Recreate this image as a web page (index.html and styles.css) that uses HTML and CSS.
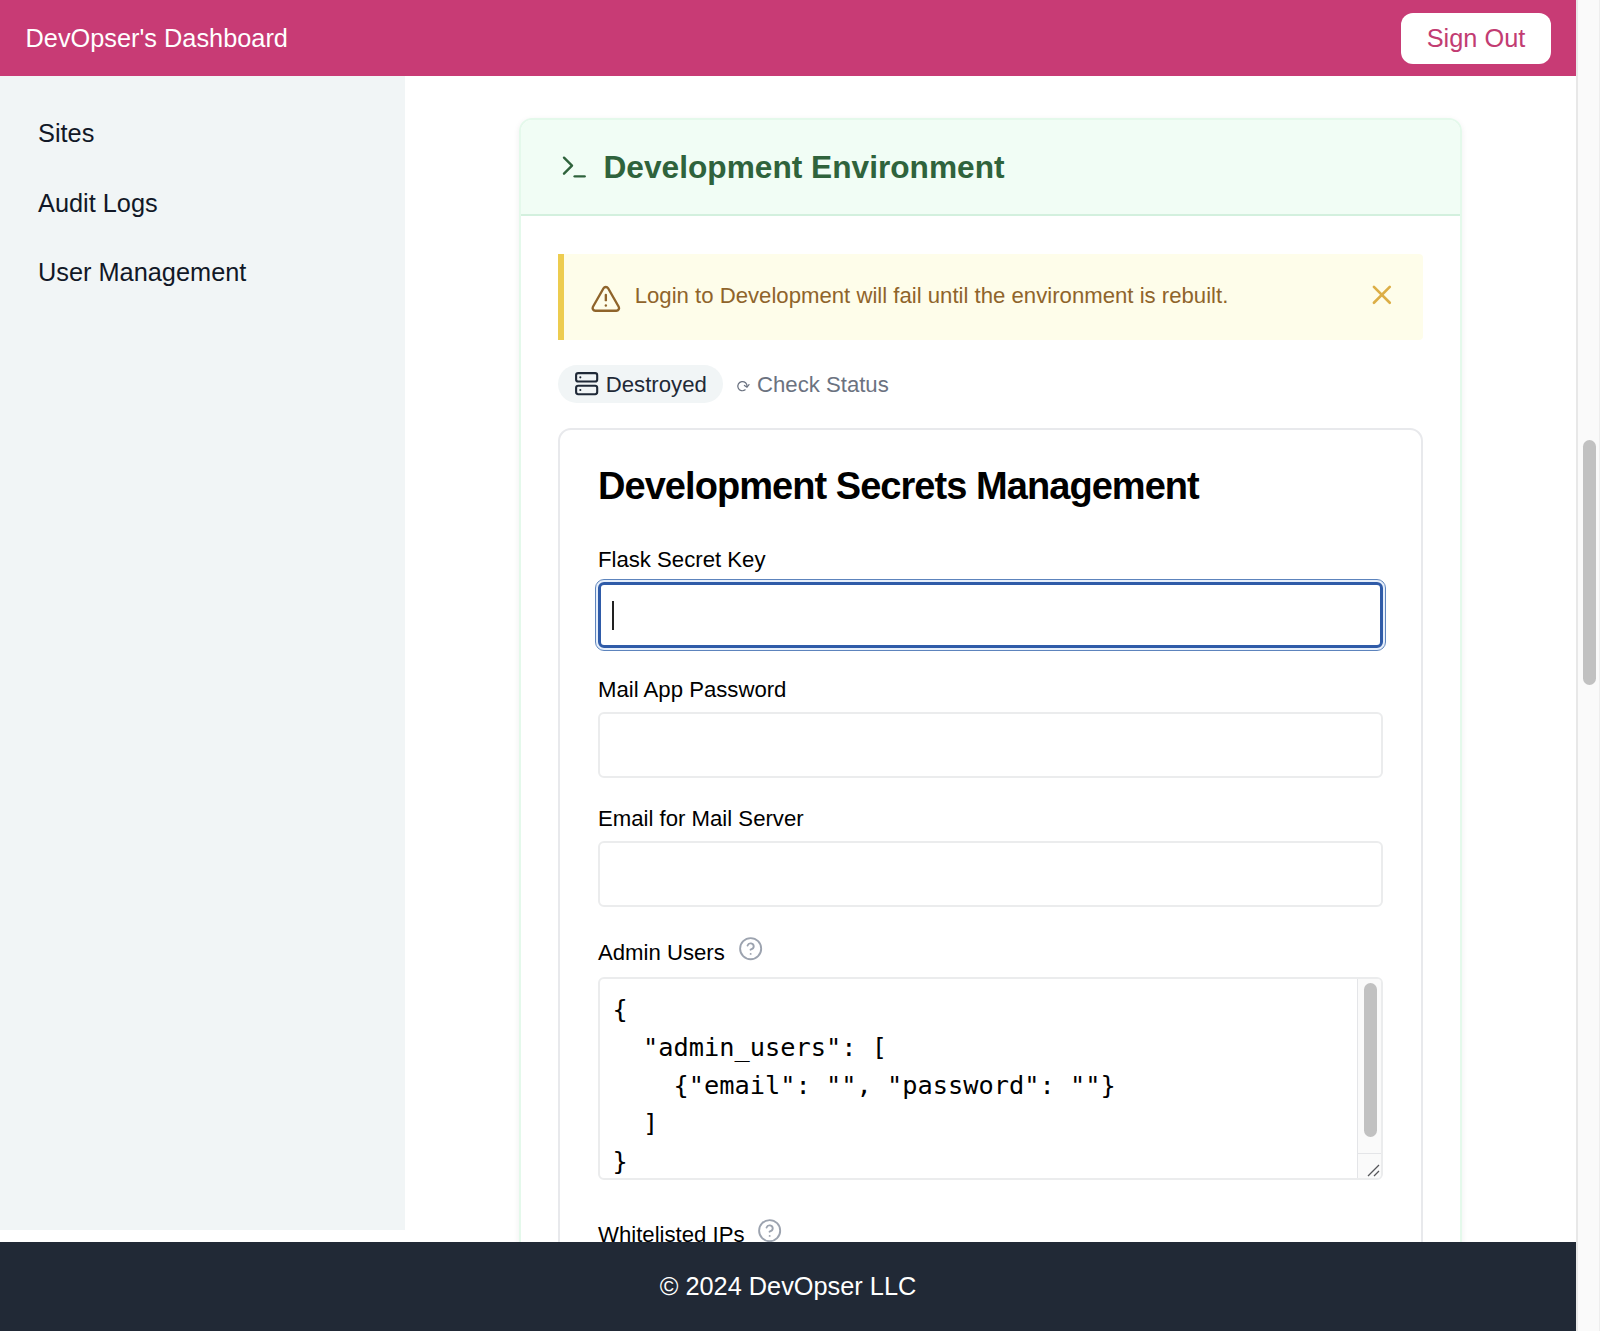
FILE: index.html
```html
<!DOCTYPE html>
<html lang="en">
<head>
    <meta charset="UTF-8">
    <meta name="viewport" content="width=device-width, initial-scale=1.0">
    <title>DevOpser's Dashboard</title>
    <link rel="stylesheet" href="styles.css">
</head>
<body>
    <div class="page">
        <header class="topbar">
            <div class="brand">DevOpser's Dashboard</div>
            <button class="sign-out">Sign Out</button>
        </header>

        <div class="content">
            <nav class="sidebar">
                <a class="nav-link">Sites</a>
                <a class="nav-link">Audit Logs</a>
                <a class="nav-link">User Management</a>
            </nav>

            <main class="main">
                <section class="env-card">
                    <div class="env-header">
                        <svg class="icon icon-terminal" viewBox="0 0 24 24"><path d="m4.5 17 6-6-6-6"/><path d="M12.5 19h7.5"/></svg>
                        <h2 class="env-title">Development Environment</h2>
                    </div>
                    <div class="env-body">
                        <div class="alert">
                            <svg class="icon icon-warning" viewBox="0 0 24 24"><path d="m21.73 18-8-14a2 2 0 0 0-3.48 0l-8 14A2 2 0 0 0 4 21h16a2 2 0 0 0 1.73-3Z"/><path d="M12 9v4"/><path d="M12 17h.01"/></svg>
                            <p class="alert-text">Login to Development will fail until the environment is rebuilt.</p>
                            <svg class="icon icon-close" viewBox="0 0 24 24"><path d="M18 6 6 18"/><path d="m6 6 12 12"/></svg>
                        </div>

                        <div class="status-row">
                            <span class="badge">
                                <svg class="icon icon-server" viewBox="0 0 24 24"><rect x="2" y="2" width="20" height="8" rx="2"/><rect x="2" y="14" width="20" height="8" rx="2"/><path d="M6 6h.01M6 18h.01"/></svg>
                                <span class="status-text">Destroyed</span>
                            </span>
                            <span class="check-status">
                                <svg class="icon icon-refresh" viewBox="0 0 14 14"><path d="M9.2 10.8A4.6 4.6 0 1 1 11 7.6"/><path d="M8.4 6.4 11 8.2l2-2.6"/></svg>
                                <span class="status-text">Check Status</span>
                            </span>
                        </div>

                        <form class="secrets">
                            <h3 class="secrets-title">Development Secrets Management</h3>

                            <label class="label">Flask Secret Key</label>
                            <div class="input focused"><span class="caret"></span></div>

                            <label class="label">Mail App Password</label>
                            <div class="input"></div>

                            <label class="label">Email for Mail Server</label>
                            <div class="input"></div>

                            <label class="label label-help">
                                <span class="label-text">Admin Users</span>
                                <svg class="icon icon-help" viewBox="0 0 24 24"><circle cx="12" cy="12" r="10"/><path d="M9.09 9a3 3 0 0 1 5.83 1c0 2-3 3-3 3"/><path d="M12 17h.01"/></svg>
                            </label>
                            <div class="textarea">
<pre class="code">{
  "admin_users": [
    {"email": "", "password": ""}
  ]
}</pre>
                                <div class="area-scroll">
                                    <div class="area-track"><div class="area-thumb"></div></div>
                                    <svg class="resizer" viewBox="0 0 22 24"><path d="M10 22 21 11M16 22l5-5"/></svg>
                                </div>
                            </div>

                            <label class="label label-help last">
                                <span class="label-text">Whitelisted IPs</span>
                                <svg class="icon icon-help" viewBox="0 0 24 24"><circle cx="12" cy="12" r="10"/><path d="M9.09 9a3 3 0 0 1 5.83 1c0 2-3 3-3 3"/><path d="M12 17h.01"/></svg>
                            </label>
                        </form>
                    </div>
                </section>
            </main>
        </div>

        <footer class="footer">© 2024 DevOpser LLC</footer>
    </div>

    <div class="scrollbar"><div class="thumb"></div></div>
</body>
</html>
```

FILE: styles.css
```css
* {
    box-sizing: border-box;
}

body {
    display: flex;
    height: 1331px;
    margin: 0;
    overflow: hidden;
    background: #fff;
    font-family: "Liberation Sans", Arial, sans-serif;
    font-size: 25.33px;
    color: #000;
}

h2, h3, p, pre {
    margin: 0;
}

.icon {
    flex: none;
    fill: none;
    stroke: currentColor;
    stroke-width: 2;
    stroke-linecap: round;
    stroke-linejoin: round;
}

.page {
    display: flex;
    flex-direction: column;
    width: 1576px;
}

/* Top bar */
.topbar {
    display: flex;
    flex: none;
    justify-content: space-between;
    align-items: center;
    height: 76px;
    padding: 0 25px 0 25.5px;
    background: #c83b75;
    color: #fff;
}

.sign-out {
    width: 150px;
    height: 51px;
    padding: 0;
    border: none;
    border-radius: 12px;
    background: #fff;
    color: #c23c72;
    font: inherit;
}

.content {
    display: flex;
    flex: none;
    align-items: flex-start;
    height: 1166px;
    overflow: hidden;
}

/* Sidebar */
.sidebar {
    display: flex;
    flex: none;
    flex-direction: column;
    gap: 31.5px;
    width: 405px;
    height: 1154px;
    padding: 38px;
    background: #f1f5f6;
}

.nav-link {
    line-height: 38px;
    color: #111827;
}

.main {
    flex: 1;
    padding: 42px 114px 0;
}

/* Environment card */
.env-card {
    height: 1300px;
    border: 2px solid #e4f9eb;
    border-radius: 13px;
    box-shadow: 0 2px 6px rgba(0, 0, 0, 0.07);
}

.env-header {
    display: flex;
    align-items: center;
    gap: 13.5px;
    height: 96px;
    padding: 0 37px;
    border-bottom: 2px solid #d3f0de;
    border-radius: 11px 11px 0 0;
    background: #f1fdf5;
    color: #2f633c;
}

.icon-terminal {
    width: 32px;
    height: 32px;
    stroke-width: 1.8;
}

.env-title {
    font-size: 31.67px;
    line-height: 44px;
}

.env-body {
    padding: 38px 37px;
}

.alert {
    display: flex;
    height: 86px;
    padding: 25px;
    border-left: 6px solid #edcc4f;
    border-radius: 0 4px 4px 0;
    background: #fefdea;
    color: #8f642b;
}

.icon-warning {
    width: 31.7px;
    height: 31.7px;
    margin: 3.5px 13px 0 1px;
    stroke-width: 1.8;
}

.alert-text {
    flex: 1;
    font-size: 22.17px;
    line-height: 34px;
}

.icon-close {
    width: 31.7px;
    height: 31.7px;
    color: #dcae46;
}

.status-row {
    display: flex;
    align-items: center;
    gap: 13px;
    height: 38px;
    margin: 25px 0;
    font-size: 22.17px;
}

.badge {
    display: flex;
    align-items: center;
    gap: 6.5px;
    width: 165px;
    height: 38px;
    padding-left: 16px;
    border-radius: 19px;
    background: #f1f5f6;
    color: #1f2937;
}

.status-text {
    padding-top: 1px;
}

.icon-server {
    width: 25.3px;
    height: 25.3px;
}

.check-status {
    display: flex;
    align-items: center;
    gap: 7px;
    color: #6b7280;
}

.icon-refresh {
    width: 14px;
    height: 14px;
    margin-top: 3px;
    stroke-width: 1.2;
}

/* Secrets form */
.secrets {
    height: 1000px;
    padding: 37.5px 38px;
    border: 2px solid #e8e9ec;
    border-radius: 13px;
}

.secrets-title {
    margin-bottom: 43.5px;
    font-size: 38px;
    line-height: 37px;
    letter-spacing: -0.025em;
    white-space: nowrap;
}

.label {
    display: block;
    margin-bottom: 11px;
    padding-top: 1px;
    font-size: 22.17px;
    line-height: 22px;
}

.input {
    height: 66px;
    margin-bottom: 29.7px;
    padding: 17px 12px;
    border: 2px solid #ebeced;
    border-radius: 6px;
}

.input.focused {
    padding-top: 16px;
    border: 3px solid #2f5ba8;
    outline: 1px solid #5d84bd;
    outline-offset: 2px;
    box-shadow: 0 0 0 2px #e6effb;
}

.caret {
    display: block;
    width: 2px;
    height: 29px;
    margin-left: -1px;
    background: #222;
}

.label-help {
    display: flex;
    align-items: flex-start;
    gap: 12.7px;
    height: 30px;
    margin-top: -0.7px;
    padding-top: 0;
}

.label-text {
    margin-top: 5.5px;
}

.label-help.last {
    margin-top: 38px;
}

.icon-help {
    width: 25.3px;
    height: 25.3px;
    color: #9ca3af;
    stroke-width: 1.8;
}

.textarea {
    display: flex;
    height: 203px;
    border: 2px solid #ebeced;
    border-radius: 6px;
    overflow: hidden;
}

.code {
    flex: 1;
    padding: 11px 12.5px;
    font-family: "DejaVu Sans Mono", monospace;
    font-size: 25.33px;
    line-height: 38px;
}

.area-scroll {
    display: flex;
    flex-direction: column;
    width: 24px;
    border-left: 1px solid #e4e5e8;
    background: #fafafa;
}

.area-track {
    flex: 1;
    padding: 4px 6px;
    border-bottom: 1px solid #e4e5e8;
}

.area-thumb {
    width: 13px;
    height: 154px;
    border-radius: 7px;
    background: #c1c1c1;
}

.resizer {
    width: 22px;
    height: 24px;
    fill: none;
    stroke: #55565a;
    stroke-width: 1.3;
}

/* Footer */
.footer {
    height: 89px;
    background: #212936;
    color: #fff;
    line-height: 89px;
    text-align: center;
}

/* Window scrollbar */
.scrollbar {
    width: 24px;
    padding: 440px 4px 0 5px;
    border-left: 2px solid #e8e8e8;
    border-right: 1px solid #eee;
    background: #fafafa;
}

.thumb {
    width: 13px;
    height: 245px;
    border-radius: 7px;
    background: #c1c1c1;
}
```
